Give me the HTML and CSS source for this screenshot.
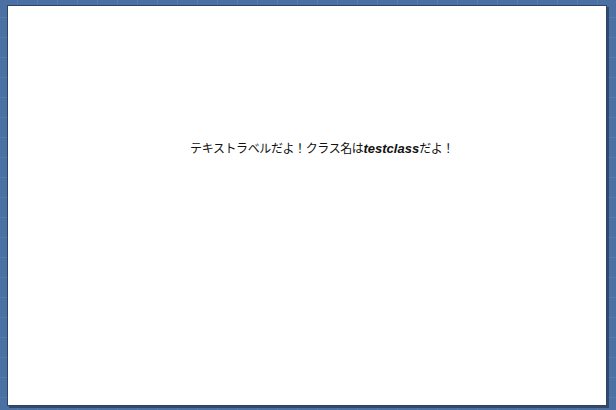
FILE: index.html
```html
<!DOCTYPE html>
<html lang="ja">
<head>
<meta charset="utf-8">
<link rel="stylesheet" href="styles.css">
</head>
<body>
<div class="stage">
  <div class="panel">
    <p class="label">テキストラベルだよ！クラス名は<b class="testclass">testclass</b>だよ！</p>
  </div>
</div>
</body>
</html>
```

FILE: styles.css
```css
html, body {
  margin: 0;
  padding: 0;
  width: 616px;
  height: 410px;
  overflow: hidden;
}
body {
  background-color: #4b70a3;
  background-image:
    linear-gradient(to right, rgba(255,255,255,0.07) 1px, transparent 1px),
    linear-gradient(to bottom, rgba(255,255,255,0.07) 1px, transparent 1px);
  background-size: 20px 20px;
  background-position: 17px 17px;
}
.stage {
  box-sizing: border-box;
  width: 616px;
  height: 410px;
  padding: 5px 9px 4px 7px;
  display: flex;
}
.panel {
  flex: 1;
  background: #ffffff;
  border: 1px solid #2c4466;
  box-shadow: 2px 2px 0 #34496a;
  display: flex;
  align-items: center;
  justify-content: center;
}
.label {
  margin: 0 0 116px 30px;
  font-family: "Noto Sans CJK JP", "Liberation Sans", sans-serif;
  font-size: 12px;
  color: #111111;
  letter-spacing: -0.4px;
}
.testclass {
  font-family: "Liberation Sans", "Noto Sans CJK JP", sans-serif;
  font-style: italic;
  font-weight: bold;
  font-size: 13px;
  letter-spacing: 0;
}
```
